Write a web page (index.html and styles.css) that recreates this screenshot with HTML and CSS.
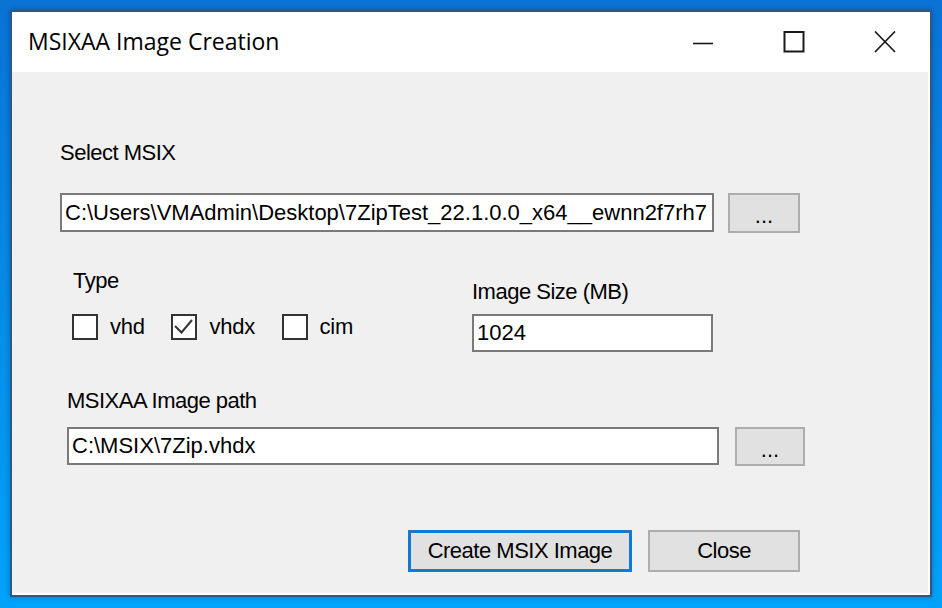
FILE: index.html
```html
<!DOCTYPE html>
<html>
<head>
<meta charset="utf-8">
<title>MSIXAA Image Creation</title>
<link rel="stylesheet" href="styles.css">
</head>
<body>
<div class="window">
  <div class="titlebar">
    <div class="title">MSIXAA Image Creation</div>
    <div class="caption-btns">
      <div class="cbtn">
        <svg width="22" height="22" viewBox="0 0 22 22"><line x1="1" y1="12.5" x2="21" y2="12.5" stroke="#1a1a1a" stroke-width="1.6"/></svg>
      </div>
      <div class="cbtn">
        <svg width="22" height="22" viewBox="0 0 22 22"><rect x="1.5" y="1" width="19" height="19.5" fill="none" stroke="#1a1a1a" stroke-width="2"/></svg>
      </div>
      <div class="cbtn">
        <svg width="22" height="22" viewBox="0 0 22 22"><path d="M1 0.5 L21 21 M21 0.5 L1 21" fill="none" stroke="#1a1a1a" stroke-width="1.7"/></svg>
      </div>
    </div>
  </div>
  <div class="client">
    <div class="sec-select">
      <div class="label">Select MSIX</div>
      <div class="field-row">
        <div class="textbox tb-msix">C:\Users\VMAdmin\Desktop\7ZipTest_22.1.0.0_x64__ewnn2f7rh7</div>
        <div class="btn btn-browse1">...</div>
      </div>
    </div>
    <div class="sec-type">
      <div class="type-col">
        <div class="label type-label">Type</div>
        <div class="checks">
          <div class="check"><span class="box"></span><span class="check-label">vhd</span></div>
          <div class="check"><span class="box checked"><svg width="22" height="22" viewBox="0 0 22 22"><polyline points="2,10 8.5,16.5 19,4" fill="none" stroke="#333" stroke-width="2"/></svg></span><span class="check-label">vhdx</span></div>
          <div class="check"><span class="box"></span><span class="check-label">cim</span></div>
        </div>
      </div>
      <div class="size-col">
        <div class="label">Image Size (MB)</div>
        <div class="textbox tb-size">1024</div>
      </div>
    </div>
    <div class="sec-path">
      <div class="label">MSIXAA Image path</div>
      <div class="field-row">
        <div class="textbox tb-path">C:\MSIX\7Zip.vhdx</div>
        <div class="btn btn-browse2">...</div>
      </div>
    </div>
    <div class="actions">
      <div class="btn btn-action btn-default">Create MSIX Image</div>
      <div class="btn btn-action btn-close">Close</div>
    </div>
  </div>
</div>
</body>
</html>
```

FILE: styles.css
```css
html, body {
  margin: 0;
  padding: 0;
}
body {
  width: 942px;
  height: 608px;
  overflow: hidden;
  background: linear-gradient(to bottom, #0a73d5 0%, #068ce8 50%, #02a2fb 100%);
  font-family: "Liberation Sans", Arial, sans-serif;
  font-size: 22px;
  color: #000;
}
.window {
  box-sizing: border-box;
  margin: 10px 0 0 10px;
  width: 922px;
  height: 587px;
  border: 2px solid #2c5a85;
  background: #ffffff;
  box-shadow: 0 0 5px rgba(0, 20, 60, 0.35);
  display: flex;
  flex-direction: column;
}
.titlebar {
  height: 60px;
  flex: none;
  display: flex;
  align-items: stretch;
  background: #ffffff;
}
.title {
  flex: 1;
  font-family: "Open Sans", "Noto Sans", sans-serif;
  font-size: 23px;
  line-height: 58px;
  padding-left: 16px;
  color: #000;
}
.caption-btns {
  display: flex;
}
.cbtn {
  width: 91px;
  height: 60px;
  display: flex;
  align-items: center;
  justify-content: center;
}
.cbtn svg {
  margin-top: -1px;
}
.client {
  flex: 1;
  background: #f0f0f0;
  margin: 0 2px 2px 0;
  display: flex;
  flex-direction: column;
}
.label {
  line-height: 24px;
  white-space: nowrap;
  letter-spacing: -0.5px;
}
.textbox {
  box-sizing: border-box;
  background: #ffffff;
  border: 2px solid #7a7a7a;
  padding: 0 3px;
  line-height: 24px;
  display: flex;
  align-items: center;
  white-space: nowrap;
  overflow: hidden;
}
.btn {
  box-sizing: border-box;
  background: #e1e1e1;
  border: 2px solid #adadad;
  display: flex;
  align-items: center;
  justify-content: center;
  line-height: 24px;
  white-space: nowrap;
}
.field-row {
  display: flex;
  align-items: flex-start;
}
.sec-select {
  margin-top: 69px;
  padding-left: 48px;
}
.sec-select .field-row {
  margin-top: 28px;
  gap: 14px;
}
.tb-msix {
  width: 654px;
  height: 39px;
}
.btn-browse1 {
  width: 72px;
  height: 40px;
  padding-top: 6px;
}
.sec-type {
  display: flex;
  align-items: flex-start;
  margin-top: 36px;
}
.type-col {
  padding-left: 60px;
  width: 400px;
}
.type-label {
  padding-left: 1px;
}
.checks {
  display: flex;
  margin-top: 21px;
  gap: 26.5px;
}
.check {
  display: flex;
  align-items: center;
  gap: 12px;
}
.box {
  box-sizing: border-box;
  width: 26px;
  height: 26px;
  border: 2px solid #333333;
  background: #ffffff;
  display: flex;
  align-items: center;
  justify-content: center;
}
.check-label {
  line-height: 24px;
  letter-spacing: -0.2px;
}
.size-col {
  margin-top: 11px;
}
.tb-size {
  margin-top: 10px;
  width: 241px;
  height: 38px;
}
.sec-path {
  margin-top: 37px;
  padding-left: 55px;
}
.sec-path .field-row {
  margin-top: 14px;
  gap: 16px;
}
.tb-path {
  width: 652px;
  height: 38px;
}
.btn-browse2 {
  width: 70px;
  height: 39px;
  padding-top: 6px;
}
.actions {
  margin-top: 64px;
  padding-left: 396px;
  display: flex;
  gap: 16px;
}
.btn-action {
  height: 42px;
  letter-spacing: -0.5px;
}
.btn-default {
  width: 224px;
  border: 3px solid #1479d4;
}
.btn-close {
  width: 152px;
}
```
